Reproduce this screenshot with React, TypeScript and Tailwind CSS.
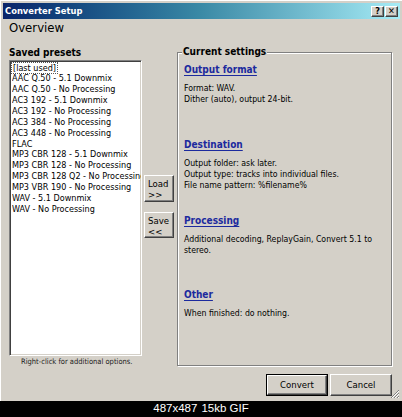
const presets = [
  'AAC Q.50 - 5.1 Downmix',
  'AAC Q.50 - No Processing',
  'AC3 192 - 5.1 Downmix',
  'AC3 192 - No Processing',
  'AC3 384 - No Processing',
  'AC3 448 - No Processing',
  'FLAC',
  'MP3 CBR 128 - 5.1 Downmix',
  'MP3 CBR 128 - No Processing',
  'MP3 CBR 128 Q2 - No Processing',
  'MP3 VBR 190 - No Processing',
  'WAV - 5.1 Downmix',
  'WAV - No Processing',
];

const sections = [
  { title: 'Output format', lines: ['Format: WAV.', 'Dither (auto), output 24-bit.'], h: 'h-[75px]' },
  {
    title: 'Destination',
    lines: ['Output folder: ask later.', 'Output type: tracks into individual files.', 'File name pattern: %filename%'],
    h: 'h-[76px]',
  },
  { title: 'Processing', lines: ['Additional decoding, ReplayGain, Convert 5.1 to', 'stereo.'], h: 'h-[74px]' },
  { title: 'Other', lines: ['When finished: do nothing.'], h: 'h-[75px]' },
];

// classic raised 3d button edge
const raised =
  'border border-t-white border-l-white border-r-[#404040] border-b-[#404040] shadow-[inset_-1px_-1px_0_#808080]';

function SideButton({ top, bottom, h }: { top: string; bottom: string; h: string }) {
  return (
    <div className={`${raised} ${h} w-[30px] bg-[#d4d0c8] pl-[3px] pt-[2px] text-[9.5px] leading-[11px]`}>
      <div>{top}</div>
      <div>{bottom}</div>
    </div>
  );
}

export default function App() {
  return (
    <div className="w-[402px] h-[417px] bg-black flex flex-col font-['DejaVu_Sans_Condensed','Liberation_Sans',sans-serif] text-black">
      <div className="relative h-[401px] bg-[#d4d0c8] border-l border-t border-l-white border-t-white p-[2px] flex flex-col">
        {/* title bar */}
        <div className="h-[16px] bg-linear-to-r from-[#0a246a] via-[#3a8aa6] to-[#a6ecf6] flex items-center justify-between pl-[2px] pr-[2px]">
          <span className="text-white font-bold text-[9.3px] leading-none">Converter Setup</span>
          <div className="flex gap-[1px]">
            <div className={`${raised} w-[13px] h-[11px] bg-[#d4d0c8] flex items-center justify-center text-[9px] font-bold leading-none`}>?</div>
            <div className={`${raised} w-[13px] h-[11px] bg-[#d4d0c8] flex items-center justify-center text-[9px] font-bold leading-none`}>✕</div>
          </div>
        </div>

        <div className="pl-[6px] pr-[8px] flex flex-col">
          <div className="mt-[1px] text-[13px] leading-[16px]">Overview</div>

          <div className="mt-[10px] flex items-start">
            {/* presets column */}
            <div className="w-[133px] min-w-0 flex flex-col">
              <div className="font-bold text-[10px] leading-[14px]">Saved presets</div>
              <div className="h-[296px] bg-white border border-t-[#808080] border-l-[#808080] border-r-white border-b-white shadow-[inset_1px_1px_0_#404040,inset_-1px_-1px_0_#d4d0c8] pl-[2px] pt-[1.5px] overflow-hidden text-[9px] leading-[10.86px] whitespace-nowrap">
                <div>
                  <span className="outline outline-1 outline-dotted outline-[#555] pl-[1px] pr-[1px]">[last used]</span>
                </div>
                {presets.map((p) => (
                  <div key={p} className="overflow-hidden">{p}</div>
                ))}
              </div>
              <div className="pl-[12px] mt-[1px] text-[7.5px] leading-[10px] text-[#222]">Right-click for additional options.</div>
            </div>

            {/* load/save */}
            <div className="ml-[2px] pt-[129px] flex flex-col gap-[10px]">
              <SideButton top="Load" bottom=">>" h="h-[27px]" />
              <SideButton top="Save" bottom="<<" h="h-[26px]" />
            </div>

            {/* current settings group */}
            <div className="relative ml-[3px] mt-[6px] w-[215px] h-[314px] border border-[#808080] shadow-[inset_1px_1px_0_#fff,1px_1px_0_#fff] pl-[6px] pt-[10px]">
              <span className="absolute left-[4px] top-[-8px] bg-[#d4d0c8] px-[1px] font-bold text-[10px] leading-[14px]">Current settings</span>
              {sections.map((s) => (
                <div key={s.title} className={s.h}>
                  <div className="font-bold text-[10px] leading-[14px] text-[#1c2a9e] underline underline-offset-[2px]">{s.title}</div>
                  <div className="mt-[6px] text-[8.7px] leading-[11px]">
                    {s.lines.map((l) => (
                      <div key={l}>{l}</div>
                    ))}
                  </div>
                </div>
              ))}
            </div>
          </div>

          {/* dialog buttons */}
          <div className="mt-[7px] flex justify-end gap-[2px]">
            <div className="w-[62px] h-[22px] border border-black">
              <div className={`${raised} h-full bg-[#d4d0c8] flex items-center justify-center text-[9.5px]`}>Convert</div>
            </div>
            <div className={`${raised} w-[62px] h-[22px] bg-[#d4d0c8] flex items-center justify-center text-[9.5px]`}>Cancel</div>
          </div>
        </div>

        {/* size grip */}
        <svg className="absolute right-[2px] bottom-[2px]" width="10" height="10" viewBox="0 0 10 10">
          <path d="M9 1 L1 9 M9 4 L4 9 M9 7 L7 9" stroke="#808080" strokeWidth="1" />
          <path d="M9 2 L2 9 M9 5 L5 9 M9 8 L8 9" stroke="#fff" strokeWidth="1" />
        </svg>
      </div>

      <div className="h-[16px] flex items-center justify-center gap-[4px] text-white text-[11.5px] leading-none font-['Liberation_Sans',sans-serif]">
        <span>487x487</span>
        <span>15kb GIF</span>
      </div>
    </div>
  );
}
